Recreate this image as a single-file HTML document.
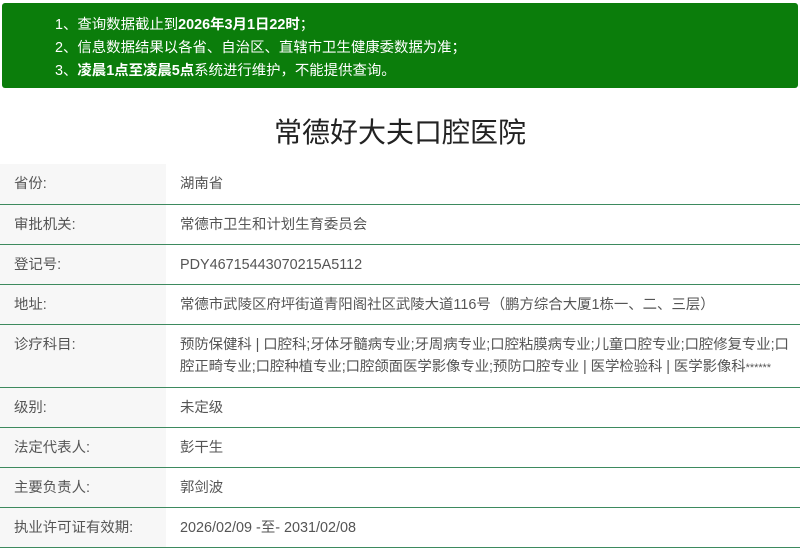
<!DOCTYPE html>
<html><head><meta charset="utf-8"><style>
body{margin:0;width:800px;height:543px;overflow:hidden;background:#fff;font-family:"Liberation Sans","Noto Sans CJK SC",sans-serif;}
.notice{position:absolute;left:2px;top:3px;width:796px;height:85px;background:#0b7d0b;border-radius:3px;color:#fff;font-size:14.4px;}
.notice div{position:absolute;left:53px;}
h1{position:absolute;top:113px;left:0;width:800px;text-align:center;margin:0;font-size:28px;font-weight:normal;color:#222;line-height:40px;}
table{position:absolute;top:164px;left:0;width:800px;border-collapse:collapse;font-size:14.4px;color:#555;}
td{border-bottom:1px solid #3d8a5e;vertical-align:top;padding:0;line-height:22px;}
td.l{background:#f7f7f7;padding-left:14px;width:152px;}
td.v{padding-left:14px;}
</style></head><body>
<div class="notice">
<div style="top:10px">1、查询数据截止到<b>2026年3月1日22时</b>；</div>
<div style="top:33px">2、信息数据结果以各省、自治区、直辖市卫生健康委数据为准；</div>
<div style="top:56px">3、<b>凌晨1点至凌晨5点</b>系统进行维护，不能提供查询。</div>
</div>
<h1>常德好大夫口腔医院</h1>
<table>
<tr style="height:40px"><td class="l" style="padding-top:9px">省份:</td><td class="v" style="padding-top:9px">湖南省</td></tr>
<tr style="height:40px"><td class="l" style="padding-top:9px">审批机关:</td><td class="v" style="padding-top:9px">常德市卫生和计划生育委员会</td></tr>
<tr style="height:40px"><td class="l" style="padding-top:9px">登记号:</td><td class="v" style="padding-top:9px">PDY46715443070215A5112</td></tr>
<tr style="height:40px"><td class="l" style="padding-top:9px">地址:</td><td class="v" style="padding-top:9px;white-space:nowrap">常德市武陵区府坪街道青阳阁社区武陵大道116号（鹏方综合大厦1栋一、二、三层）</td></tr>
<tr style="height:63px"><td class="l" style="padding-top:9px">诊疗科目:</td><td class="v" style="padding-top:9px;padding-right:0;letter-spacing:-0.05px">预防保健科 | 口腔科;牙体牙髓病专业;牙周病专业;口腔粘膜病专业;儿童口腔专业;口腔修复专业;口<br>腔正畸专业;口腔种植专业;口腔颌面医学影像专业;预防口腔专业 | 医学检验科 | 医学影像科<span style="font-size:11px">******</span></td></tr>
<tr style="height:40px"><td class="l" style="padding-top:9px">级别:</td><td class="v" style="padding-top:9px">未定级</td></tr>
<tr style="height:40px"><td class="l" style="padding-top:9px">法定代表人:</td><td class="v" style="padding-top:9px">彭干生</td></tr>
<tr style="height:40px"><td class="l" style="padding-top:9px">主要负责人:</td><td class="v" style="padding-top:9px">郭剑波</td></tr>
<tr style="height:40px"><td class="l" style="padding-top:9px">执业许可证有效期:</td><td class="v" style="padding-top:9px">2026/02/09 -至- 2031/02/08</td></tr>
</table>
</body></html>
